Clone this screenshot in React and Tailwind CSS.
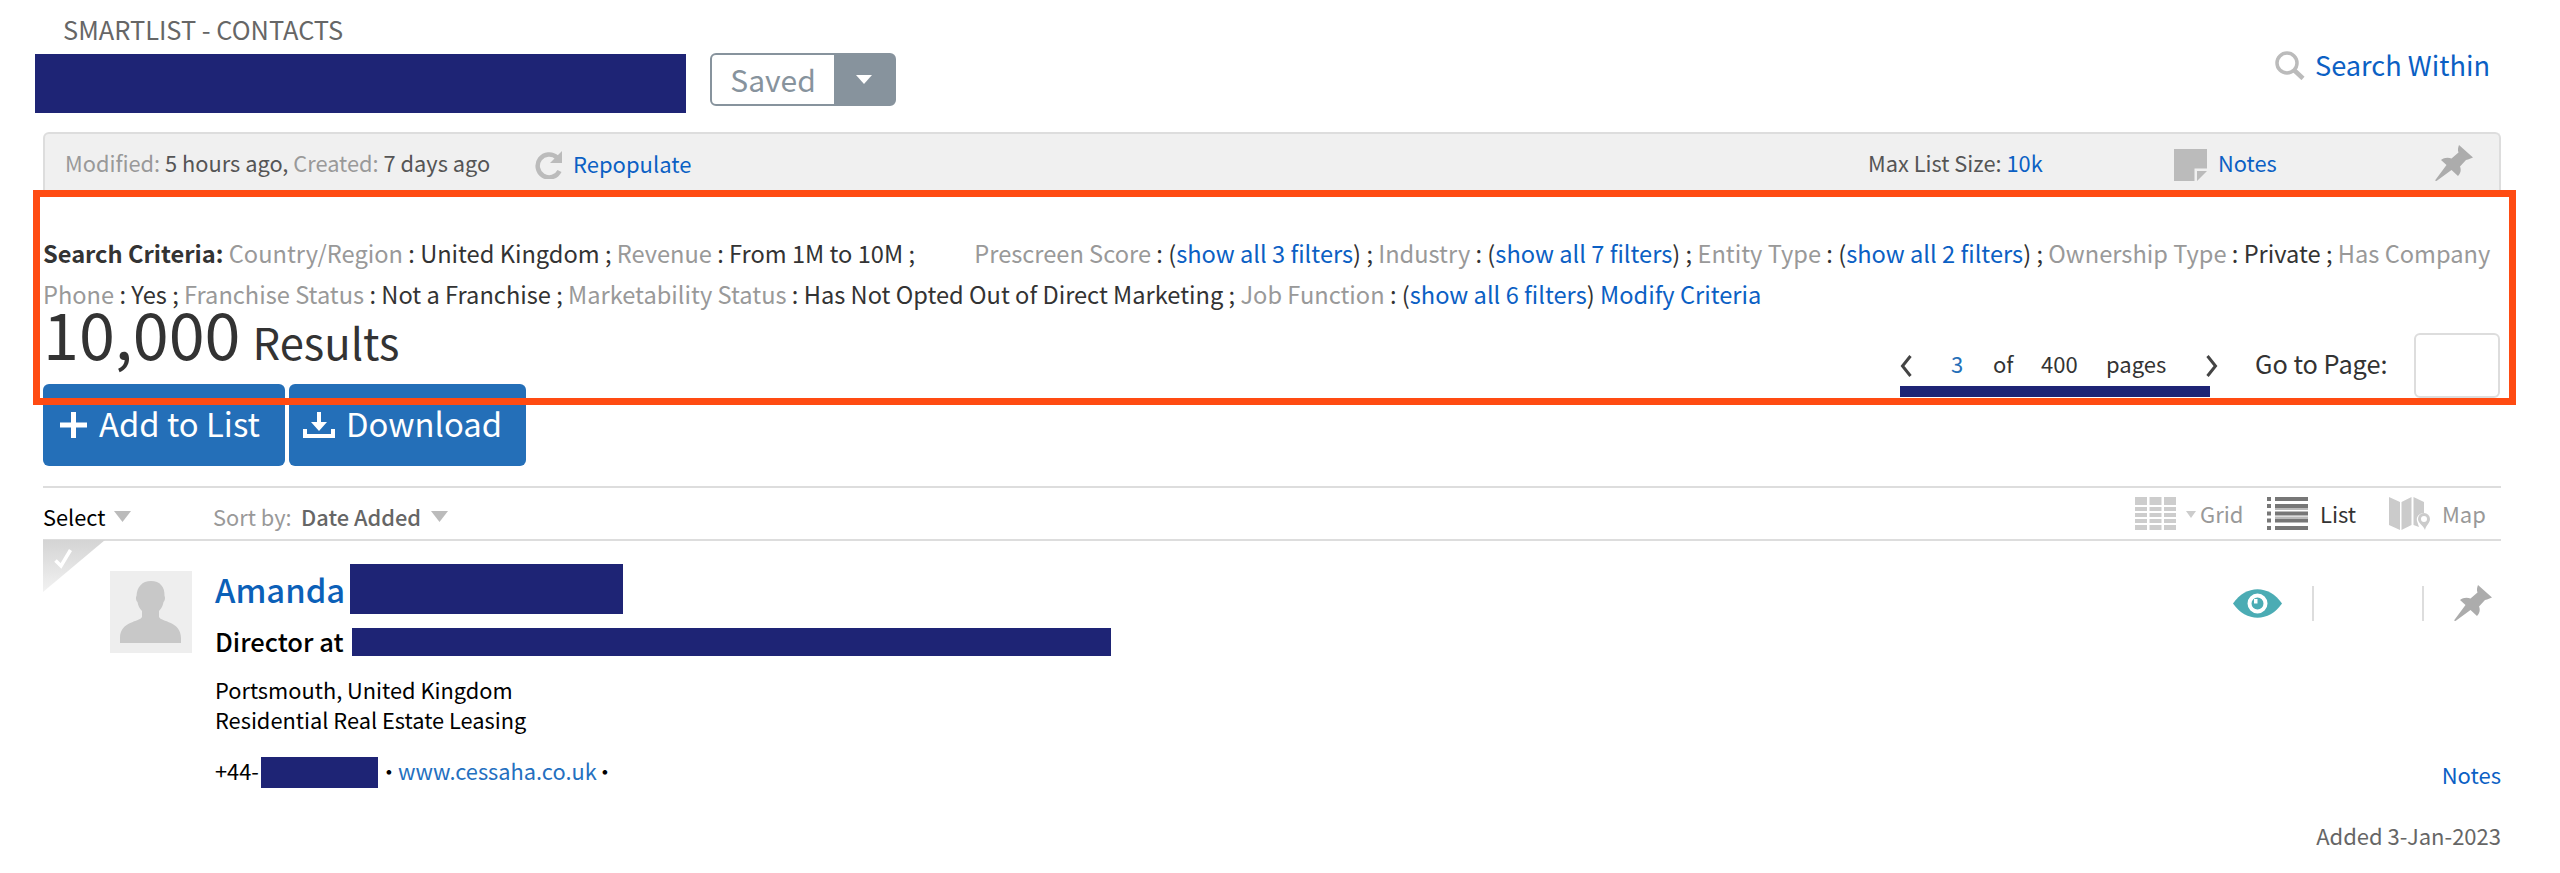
const criteriaLines = [
  [
    { label: "Country/Region", value: "United Kingdom" },
    { label: "Revenue", value: "From 1M to 10M", gap: true },
    { label: "Prescreen Score", filters: 3 },
    { label: "Industry", filters: 7 },
    { label: "Entity Type", filters: 2 },
    { label: "Ownership Type", value: "Private" },
    { label: "Has Company", open: true },
  ],
  [
    { label: "Phone", value: "Yes" },
    { label: "Franchise Status", value: "Not a Franchise" },
    { label: "Marketability Status", value: "Has Not Opted Out of Direct Marketing" },
    { label: "Job Function", filters: 6, last: true },
  ],
];

function Criterion({ item }) {
  return (
    <>
      <span className="text-[#999]">{item.label}</span>
      {!item.open && (
        <>
          {" : "}
          {item.filters ? (
            <>
              (<a className="text-[#0b60c4]">show all {item.filters} filters</a>)
            </>
          ) : (
            item.value
          )}
          {item.last ? " " : " ; "}
          {item.gap && <span className="inline-block w-[54px]" />}
        </>
      )}
    </>
  );
}

function Redacted({ className }) {
  return <div className={`bg-[#1e2475] shrink-0 ${className}`} />;
}

function Caret({ className }) {
  return (
    <svg viewBox="0 0 17 11" preserveAspectRatio="none" className={className}>
      <path d="M0 0h17L8.5 11z" fill="currentColor" />
    </svg>
  );
}

function PinIcon({ className }) {
  return (
    <svg viewBox="0 0 38 36" className={className} fill="#acacac">
      <path d="M24 0 38 12.500 33 14.500 31 15 25 21.500 C26.500 25 25.500 28.500 23 31 L16.500 25 1.500 36 0 35.500 11.500 20 6 15 C9 12.500 13 12 16.500 13.500 L23.500 7.500 C22.500 5 23 2.500 24 0Z" />
    </svg>
  );
}

function Chevron({ flip }) {
  return (
    <svg
      viewBox="0 0 12 22"
      className={flip ? "w-3 h-[22px] rotate-180" : "w-3 h-[22px]"}
      fill="none"
      stroke="#444"
      strokeWidth="3"
    >
      <path d="M10.500 1 2.500 11l8 10" />
    </svg>
  );
}

function GridIcon() {
  const rows = [
    [0, 8],
    [10, 4],
    [16, 4],
    [22, 4],
    [28, 5],
  ];
  return (
    <svg viewBox="0 0 41 33" className="w-[41px] h-[33px]" fill="#cdcdcd">
      {rows.map(([y, h]) =>
        [0, 14.5, 29].map((x) => <rect key={`${x}-${y}`} x={x} y={y} width="12" height={h} />)
      )}
    </svg>
  );
}

function ListIcon() {
  return (
    <svg viewBox="0 0 41 33" className="w-[41px] h-[33px]" fill="#777">
      {[0, 7, 14.5, 21.5, 29].map((y, i) => (
        <g key={y}>
          <rect x="0" y={y} width="4" height="4" />
          <rect x="8" y={y} width="33" height="4" />
          {i % 2 === 1 && <rect x="8" y={i === 1 ? y + 4 : y - 2} width="33" height="2" fill="#bbb" />}
        </g>
      ))}
    </svg>
  );
}

function MapIcon() {
  return (
    <svg viewBox="0 0 41 33" className="w-[41px] h-[33px]" fill="#cbcbcb">
      <path d="M0 0 11 5v28L0 28zM12.500 5 22.500 0v28l-10 5zM24.500 0 35 5v11c-5 0-8 4-7 8l2 6-5.500-2z" />
      <path
        fillRule="evenodd"
        d="M35 16a6 6 0 0 1 6 6c0 4-4 6-5 11-2-5-7-7-7-11a6 6 0 0 1 6-6zm0 3a3 3 0 1 0 0 6 3 3 0 0 0 0-6z"
      />
    </svg>
  );
}

function InfoBar() {
  return (
    <div className="ml-[43px] w-[2458px] h-[60px] bg-[#f0f0f0] border-2 border-b-0 border-[#ddd] rounded-t-md flex items-center pl-5 pr-[26px] text-[22px] leading-8 text-[#555]">
      <div className="w-[469px] text-[21.8px] whitespace-nowrap">
        <span className="text-[#999]">Modified:</span> 5 hours ago,{" "}
        <span className="text-[#999]">Created:</span> 7 days ago
      </div>
      <svg viewBox="0 0 28 28" className="mt-[4px] w-7 h-7" fill="none">
        <path d="M23 6.500A11.500 11.500 0 1 0 25.500 20" stroke="#bbb" strokeWidth="4.500" />
        <path d="M28 0v12H16z" fill="#bbb" />
      </svg>
      <a className="ml-[11px] text-[#0b60c4]">Repopulate</a>
      <div className="ml-auto w-[306px] text-[21.8px]">
        Max List Size: <a className="text-[#0b60c4]">10k</a>
      </div>
      <svg viewBox="0 0 33 32" className="mt-[3px] w-[33px] h-8" fill="#bbb">
        <path d="M0 0h33v19.500H20.500V32H0zM23 22h10L23 32z" />
      </svg>
      <a className="ml-[11px] w-[217px] text-[21.8px] text-[#0b60c4]">Notes</a>
      <PinIcon className="w-[38px] h-9" />
    </div>
  );
}

function ResultsRow() {
  return (
    <div className="ml-[43px] w-[2458px] h-[71px] flex text-[#333]">
      <div className="leading-[38px] text-[64.7px] whitespace-nowrap">
        10,000<span className="ml-[12px] text-[43.6px]">Results</span>
      </div>
      <div className="ml-auto flex text-[22px]">
        <div className="w-[355px]">
          <div className="mt-[37px] h-[36px] flex items-start leading-[27px]">
            <div className="pt-[5px] flex">
              <Chevron />
            </div>
            <span className="ml-[39px] w-[42px] text-[#246fb8]">3</span>
            <span className="w-12">of</span>
            <span className="w-[65px]">400</span>
            <span className="w-[100px]">pages</span>
            <div className="pt-[5px] flex">
              <Chevron flip />
            </div>
          </div>
          <Redacted className="w-[310px] h-[11px]" />
        </div>
        <div className="mt-[37px] w-[159px] h-[26px] text-[25.3px] leading-[27px]">Go to Page:</div>
        <div className="mt-5 mr-[1px] w-[86px] h-[65px] border-2 border-[#ddd] rounded-md bg-white" />
      </div>
    </div>
  );
}

function Toolbar() {
  return (
    <div className="ml-[43px] mt-[20px] w-[2458px] h-[55px] border-y-2 border-[#ddd] flex items-center text-[22px] leading-8">
      <div className="mt-[6px] flex items-center">
        <span className="w-[71px] text-[21.8px] text-black">Select</span>
        <Caret className="w-[17px] h-[11px] text-[#bbb]" />
        <span className="ml-[82px] w-[88px] text-[21.8px] text-[#999]">Sort by:</span>
        <span className="w-[130px] font-medium text-[21.8px] text-[#666]">Date Added</span>
        <Caret className="w-[17px] h-[11px] text-[#bbb]" />
      </div>
      <div className="ml-auto flex items-center text-[#999]">
        <GridIcon />
        <Caret className="ml-[10px] mt-[2px] w-[10px] h-[7px] text-[#ccc]" />
        <span className="ml-1 -mt-[2px] w-[67px]">Grid</span>
        <ListIcon />
        <span className="ml-3 -mt-[2px] w-[69px] text-[#333]">List</span>
        <MapIcon />
        <span className="ml-[12px] -mt-[2px] w-[59px]">Map</span>
      </div>
    </div>
  );
}

function ContactCard() {
  return (
    <div className="ml-[43px] -mt-[1px] w-[2458px] h-[333px] flex text-[21.8px] text-black">
      <svg viewBox="0 0 62 52" className="w-[62px] h-[52px]">
        <defs>
          <linearGradient id="corner" x1="0" y1="0" x2="0" y2="1">
            <stop offset="0" stopColor="#d4d4d4" />
            <stop offset="1" stopColor="#f2f2f2" />
          </linearGradient>
        </defs>
        <path d="M0 0h62L0 52z" fill="url(#corner)" />
        <path d="M12.500 20.500 18 26 27.500 10" fill="none" stroke="#fff" strokeWidth="3.500" />
      </svg>
      <svg viewBox="0 0 82 82" className="mt-[31px] ml-[5px] w-[82px] h-[82px]">
        <path d="M0 0h82v82H0z" fill="#eee" />
        <path
          d="M41 10c9 0 14 6 13.500 15 1 1 .5 5-1 6-.5 4-2.500 7-4.500 9v6c2 5 22 4 22 21v5H10v-5c0-17 20-16 22-21v-6c-2-2-4-5-4.500-9-1.500-1-2-5-1-6C27 16 32 10 41 10z"
          fill="#c8c8c8"
        />
      </svg>
      <div className="ml-[23px] whitespace-nowrap">
        <div className="mt-[24px] h-[50px] flex items-center">
          <span className="w-[135px] text-[32.8px] leading-[50px] font-medium text-[#0b60b8]">Amanda</span>
          <Redacted className="w-[273px] h-[50px]" />
        </div>
        <div className="mt-[14px] h-7 flex">
          <span className="w-[137px] text-[25.5px] leading-[26px] font-medium">Director at</span>
          <Redacted className="w-[759px] h-7" />
        </div>
        <div className="mt-[19px] leading-[30px]">Portsmouth, United Kingdom</div>
        <div className="leading-[30px]">Residential Real Estate Leasing</div>
        <div className="mt-[22px] h-[31px] flex leading-[28px]">
          <span className="w-[46px]">+44-</span>
          <Redacted className="w-[117px] h-[31px]" />
          <span className="w-[20px]">•</span>
          <a className="w-[196px] text-[#2470c0]">www.cessaha.co.uk</a>
          <span>•</span>
        </div>
      </div>
      <div className="ml-auto flex flex-col items-end">
        <div className="mt-[45px] mr-[9px] h-9 flex items-center">
          <svg viewBox="0 0 49 29" className="w-[49px] h-[29px]">
            <path d="M0 14.500C13-4.500 36-4.500 49 14.500 36 33.500 13 33.500 0 14.500z" fill="#4bacb4" />
            <circle cx="24.500" cy="14.500" r="8" fill="#4bacb4" stroke="#fff" strokeWidth="4" />
            <path d="M24.500 14.500h-3.500v-4.500h3.500z" fill="#fff" />
          </svg>
          <div className="ml-[30px] w-[2px] h-[35px] bg-[#ddd]" />
          <div className="ml-[108px] w-[2px] h-[35px] bg-[#ddd]" />
          <PinIcon className="ml-[30px] w-[38px] h-9" />
        </div>
        <a className="mt-[137px] text-[22px] leading-8 text-[#0b60c4]">Notes</a>
        <div className="mt-[29px] text-[22px] leading-8 text-[#666]">Added 3-Jan-2023</div>
      </div>
    </div>
  );
}

export default function App() {
  return (
    <div className="relative w-[2560px] h-[873px] overflow-hidden bg-white font-['Noto_Sans_CJK_SC','Source_Sans_Pro',sans-serif]">
      <div className="h-[132px] flex">
        <div className="pl-[35px]">
          <div className="pl-7 pt-[14px] h-[54px] text-[25.4px] leading-[30px] text-[#666]">SMARTLIST - CONTACTS</div>
          <div className="flex">
            <Redacted className="w-[651px] h-[59px]" />
            <div className="ml-6 -mt-[1px] w-[186px] h-[53px] flex rounded-md border-2 border-[#87939d] bg-[#87939d] overflow-hidden">
              <div className="w-[122px] bg-white text-center text-[30px] leading-[48px] text-[#87939d]">Saved</div>
              <div className="flex-1 flex items-center justify-center">
                <Caret className="w-4 h-[9px] text-white" />
              </div>
            </div>
          </div>
        </div>
        <div className="ml-auto mr-[70px] mt-[45px] h-10 flex items-center">
          <svg viewBox="0 0 30 29" className="w-[30px] h-[29px]" fill="none" stroke="#bbb">
            <circle cx="12" cy="12" r="10" strokeWidth="3.500" />
            <path d="m19.500 19.500 8.500 8" strokeWidth="4.500" />
          </svg>
          <a className="ml-[10px] -mt-[2px] text-[27.2px] leading-10 text-[#0b60c4]">Search Within</a>
        </div>
      </div>

      <InfoBar />

      <div className="pl-[43px] pt-[41px] h-[121px] text-[23.63px] leading-[40px] text-[#333]">
        {criteriaLines.map((line, i) => (
          <div key={i} className="h-[41px] whitespace-nowrap">
            {i === 0 && <span className="font-bold">Search Criteria: </span>}
            {line.map((item) => (
              <Criterion key={item.label} item={item} />
            ))}
            {i === 1 && <a className="text-[#0b60c4]">Modify Criteria</a>}
          </div>
        ))}
      </div>

      <ResultsRow />

      <div className="ml-[43px] h-[82px] flex gap-1 text-[32.8px] leading-[40px] text-white">
        <button className="w-[242px] pl-[17px] flex items-center rounded-md bg-[#246fb8]">
          <svg viewBox="0 0 27 26" className="w-[27px] h-[26px]" fill="#fff">
            <path d="M11 0h5v10.500h11v5H16V26h-5V15.500H0v-5h11z" />
          </svg>
          <span className="ml-[12px] -mt-[4px]">Add to List</span>
        </button>
        <button className="w-[237px] pl-[14px] flex items-center rounded-md bg-[#246fb8]">
          <svg viewBox="0 0 32 26" className="w-8 h-[26px]" fill="#fff">
            <path d="M14 0h4v10h6l-8 9-8-9h6zM0 17h4v5h24v-5h4v9H0z" />
          </svg>
          <span className="ml-[11px] -mt-[4px]">Download</span>
        </button>
      </div>

      <Toolbar />
      <ContactCard />

      {/* Highlight frame over the criteria block */}
      <div className="absolute left-[33px] top-[190px] w-[2483px] h-[215px] border-[7px] border-[#ff4b12] pointer-events-none" />
    </div>
  );
}
